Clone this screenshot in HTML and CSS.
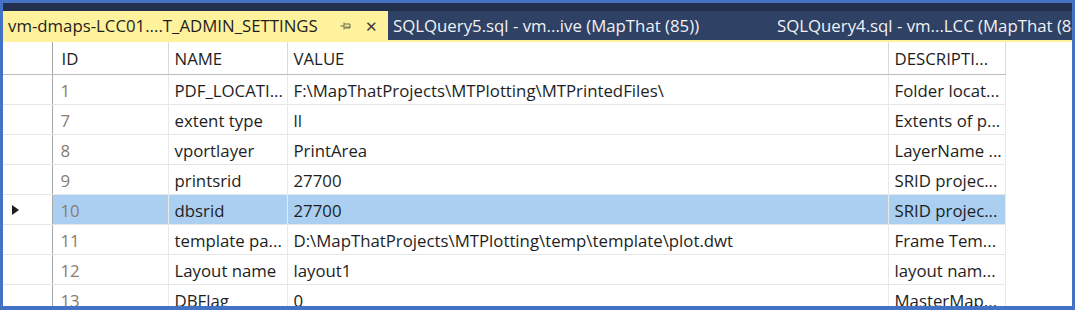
FILE: index.html
```html
<!DOCTYPE html>
<html>
<head>
<meta charset="utf-8">
<link rel="stylesheet" href="styles.css">
</head>
<body>
<div class="frame">
  <div class="topstrip"></div>
  <div class="tabs">
    <div class="tab active">
      <span class="tab-title">vm-dmaps-LCC01....T_ADMIN_SETTINGS</span>
      <svg class="pin" width="12" height="10" viewBox="0 0 12 10"><path d="M0.5 5H4M4 1.5V8.5M4 3H10V7H4M5 6H10" fill="none" stroke="#6b6b50" stroke-width="1"/></svg>
      <span class="close">&#x2715;</span>
    </div>
    <div class="tab t2">SQLQuery5.sql - vm...ive (MapThat (85))</div>
    <div class="tab t3">SQLQuery4.sql - vm...LCC (MapThat (84))</div>
  </div>
  <div class="gridwrap">
    <table class="grid">
      <colgroup>
        <col class="c-ind"><col class="c-id"><col class="c-name"><col class="c-val"><col class="c-desc">
      </colgroup>
      <thead>
        <tr><th class="ind"></th><th class="id">ID</th><th>NAME</th><th>VALUE</th><th>DESCRIPTI...</th></tr>
      </thead>
      <tbody>
        <tr><td class="ind"></td><td class="id">1</td><td>PDF_LOCATI...</td><td>F:\MapThatProjects\MTPlotting\MTPrintedFiles\</td><td>Folder locat...</td></tr>
        <tr><td class="ind"></td><td class="id">7</td><td>extent type</td><td>ll</td><td>Extents of p...</td></tr>
        <tr><td class="ind"></td><td class="id">8</td><td>vportlayer</td><td>PrintArea</td><td>LayerName ...</td></tr>
        <tr><td class="ind"></td><td class="id">9</td><td>printsrid</td><td>27700</td><td>SRID projec...</td></tr>
        <tr class="sel"><td class="ind"><span class="arrow"></span></td><td class="id">10</td><td>dbsrid</td><td>27700</td><td>SRID projec...</td></tr>
        <tr><td class="ind"></td><td class="id">11</td><td>template pa...</td><td>D:\MapThatProjects\MTPlotting\temp\template\plot.dwt</td><td>Frame Tem...</td></tr>
        <tr><td class="ind"></td><td class="id">12</td><td>Layout name</td><td>layout1</td><td>layout nam...</td></tr>
        <tr><td class="ind"></td><td class="id">13</td><td>DBFlag</td><td>0</td><td>MasterMap...</td></tr>
      </tbody>
    </table>
  </div>
</div>
</body>
</html>
```
FILE: styles.css
```css
* { box-sizing: border-box; }
html, body { margin: 0; padding: 0; background: #fff; }
body { font-family: "Open Sans", "Noto Sans", sans-serif; }
.frame {
  width: 1075px;
  height: 310px;
  border: 3px solid #4472c4;
  border-bottom-width: 4px;
  overflow: hidden;
  display: flex;
  flex-direction: column;
  background: #fff;
}
.topstrip { height: 8px; background: #22304d; flex: none; }
.tabs {
  height: 31px;
  flex: none;
  display: flex;
  background: #2f4164;
  border-bottom: 2px solid #fff29d;
  white-space: nowrap;
  overflow: hidden;
  font-size: 16.8px;
}
.tab {
  display: flex;
  align-items: center;
  padding-left: 5px;
  color: #f0f2f6;
  flex: none;
}
.tab.active {
  background: #fff29d;
  color: #1e1e1e;
  width: 385px;
}
.tab-title { flex: none; }
.pin { margin-left: 22px; }
.close { margin-left: 13px; font-size: 15px; color: #3c3c3c; }
.t2 { width: 384px; }
.gridwrap { flex: 1; overflow: hidden; }
.grid {
  border-collapse: collapse;
  table-layout: fixed;
  width: 1002px;
  font-size: 16.8px;
  color: #1e1e1e;
}
.c-ind { width: 49px; }
.c-id { width: 116px; }
.c-name { width: 119px; }
.c-val { width: 601px; }
.c-desc { width: 117px; }
.grid th {
  height: 32px;
  font-weight: normal;
  text-align: left;
  padding: 2px 0 0 6px;
  border-right: 1px solid #dadada;
  border-bottom: 1px solid #bdbdbd;
  white-space: nowrap;
  overflow: hidden;
}
.grid td {
  height: 30px;
  padding: 3px 0 0 6px;
  border-right: 1px solid #e9e9e9;
  border-bottom: 1px solid #e6e6e6;
  white-space: nowrap;
  overflow: hidden;
}
.grid th.ind, .grid td.ind { border-right: 1px solid #a8a8a8; padding: 2px 0 0 9px; }
.grid th.id { padding-left: 9px; }
.grid td.id { color: #8c7b70; padding-left: 8px; }
.grid tr.sel td { background: #aacff1; }
.grid tr.sel td.ind { background: #fff; }
.arrow {
  display: block;
  width: 0; height: 0;
  border-top: 5.5px solid transparent;
  border-bottom: 5.5px solid transparent;
  border-left: 7px solid #1e1e1e;
}
```
